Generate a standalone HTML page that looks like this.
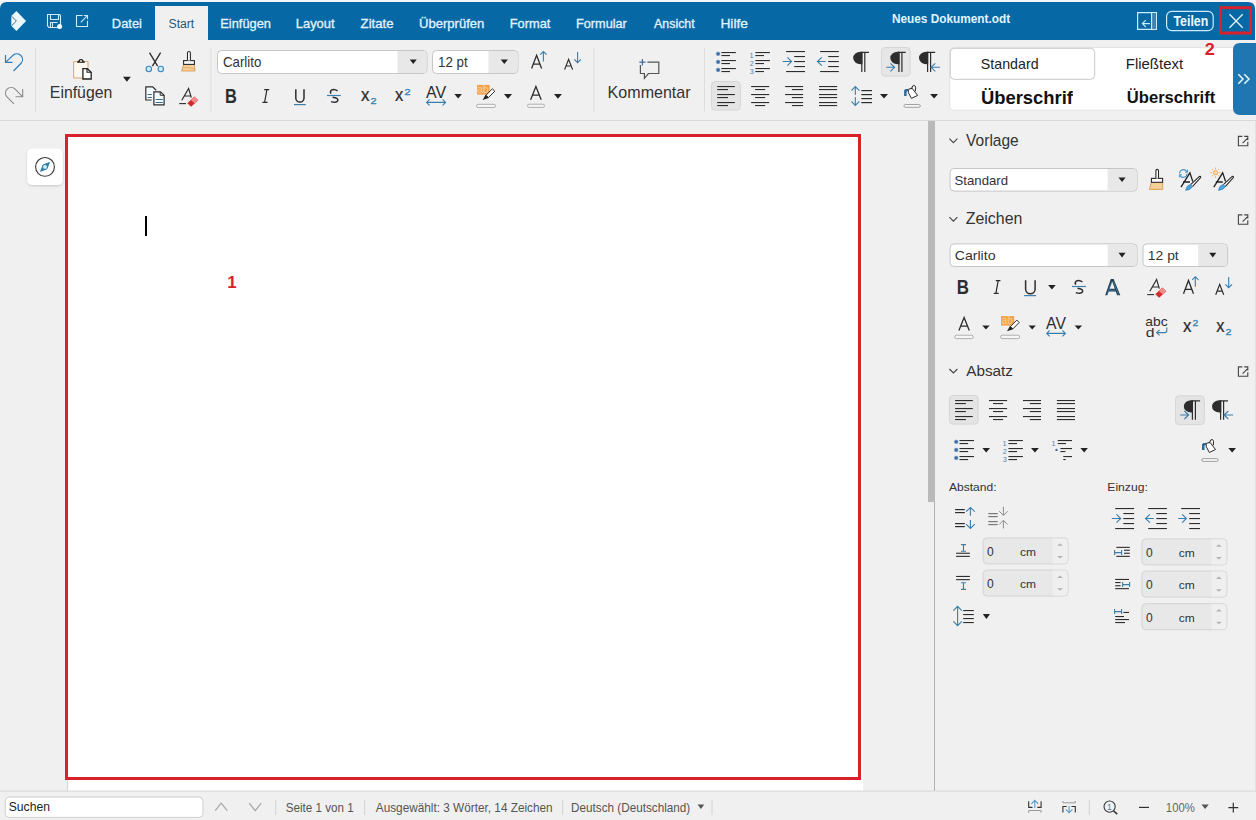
<!DOCTYPE html>
<html><head><meta charset="utf-8"><title>Neues Dokument.odt</title>
<style>
html,body{margin:0;padding:0;width:1256px;height:820px;overflow:hidden;background:#f0f0f0;font-family:"Liberation Sans",sans-serif}
svg{display:block}
</style></head><body>
<svg width="1256" height="820" viewBox="0 0 1256 820">
<defs><filter id="sh" x="-20%" y="-20%" width="140%" height="140%"><feDropShadow dx="0" dy="1" stdDeviation="1" flood-color="#000" flood-opacity="0.18"/></filter></defs>
<rect x="0" y="0" width="1256" height="42" fill="#f3f7fa" />
<path d="M0,9 Q0,2 7,2 H1248 Q1255,2 1255,9 V40 H0 Z" fill="#0669a5"/>
<rect x="155" y="6" width="53" height="34" fill="#f0f0f0" />
<path d="M16.4,10.9 L26.1,21 L16.4,31.1 L11.3,25.8 L11.3,16.1 Z" fill="#eaf7ff"/>
<path d="M11.7,16.3 L16.4,21 L11.7,25.7" stroke="#2a4058" stroke-width="0.8" fill="none" />
<path d="M47.5,14.5 H59.5 L60.5,15.5 V27.5 H49 L47.5,26 Z" stroke="#c9ecff" stroke-width="1.1" fill="none" />
<path d="M50.5,14.5 V19.5 H58.5 V14.5" stroke="#c9ecff" stroke-width="1.1" fill="none" />
<path d="M50.5,27.5 V22.5 H57.5" stroke="#c9ecff" stroke-width="1.1" fill="none" />
<path d="M52.5,23 V27" stroke="#c9ecff" stroke-width="1" fill="none" />
<circle cx="59.6" cy="26.4" r="2.5" fill="#f2fbff"/>
<path d="M82.5,15.5 H76.5 V26.5 H87.5 V20.8" stroke="#c9ecff" stroke-width="1.1" fill="none" />
<path d="M80.8,22.3 L87.3,15.7 M83.8,15.5 H87.5 V19.2" stroke="#c9ecff" stroke-width="1.1" fill="none" />
<text transform="matrix(1.0006,0,0,1,111.87,27.90)" font-family="Liberation Sans" font-weight="normal" font-size="12.90" fill="#e2f3ff" stroke="#e2f3ff" stroke-width="0.3">Datei</text>
<text transform="matrix(0.9956,0,0,1,220.27,27.90)" font-family="Liberation Sans" font-weight="normal" font-size="12.90" fill="#e2f3ff" stroke="#e2f3ff" stroke-width="0.3">Einfügen</text>
<text transform="matrix(1.0027,0,0,1,295.77,27.90)" font-family="Liberation Sans" font-weight="normal" font-size="12.90" fill="#e2f3ff" stroke="#e2f3ff" stroke-width="0.3">Layout</text>
<text transform="matrix(1.0231,0,0,1,360.60,27.90)" font-family="Liberation Sans" font-weight="normal" font-size="12.90" fill="#e2f3ff" stroke="#e2f3ff" stroke-width="0.3">Zitate</text>
<text transform="matrix(1.0130,0,0,1,419.02,27.90)" font-family="Liberation Sans" font-weight="normal" font-size="12.90" fill="#e2f3ff" stroke="#e2f3ff" stroke-width="0.3">Überprüfen</text>
<text transform="matrix(0.9943,0,0,1,509.77,27.90)" font-family="Liberation Sans" font-weight="normal" font-size="12.90" fill="#e2f3ff" stroke="#e2f3ff" stroke-width="0.3">Format</text>
<text transform="matrix(0.9867,0,0,1,575.98,27.90)" font-family="Liberation Sans" font-weight="normal" font-size="12.90" fill="#e2f3ff" stroke="#e2f3ff" stroke-width="0.3">Formular</text>
<text transform="matrix(0.9626,0,0,1,654.00,27.90)" font-family="Liberation Sans" font-weight="normal" font-size="12.90" fill="#e2f3ff" stroke="#e2f3ff" stroke-width="0.3">Ansicht</text>
<text transform="matrix(1.0709,0,0,1,720.39,27.90)" font-family="Liberation Sans" font-weight="normal" font-size="12.90" fill="#e2f3ff" stroke="#e2f3ff" stroke-width="0.3">Hilfe</text>
<text transform="matrix(0.9341,0,0,1,168.55,28.20)" font-family="Liberation Sans" font-weight="normal" font-size="13.04" fill="#2a5878" >Start</text>
<text transform="matrix(0.8784,0,0,1,891.93,22.60)" font-family="Liberation Sans" font-weight="bold" font-size="13.48" fill="#e2f3ff" >Neues Dokument.odt</text>
<path d="M1137.6,12.6 H1156.4 V29.4 H1137.6 Z" stroke="#c9ecff" stroke-width="1.2" fill="none" />
<rect x="1152.2" y="13.2" width="3.6" height="15.6" fill="#3f82b8" />
<path d="M1151.6,12.6 V29.4" stroke="#c9ecff" stroke-width="1.2" fill="none" />
<path d="M1142.4,23.6 H1149.9 M1145.8,20.2 L1142.4,23.6 L1145.8,27" stroke="#c9ecff" stroke-width="1.1" fill="none" />
<rect x="1166.6" y="11.4" width="46.6" height="19.2" rx="5" fill="none" stroke="#c9ecff" stroke-width="1.2"/>
<text transform="matrix(0.8695,0,0,1,1173.48,26.00)" font-family="Liberation Sans" font-weight="bold" font-size="14.20" fill="#f0faff" >Teilen</text>
<path d="M1229.5,14.3 L1242.7,27.7 M1242.7,14.3 L1229.5,27.7" stroke="#e4f6ff" stroke-width="1.3" fill="none" />
<rect x="0" y="40" width="1256" height="80" fill="#f0f0f0" />
<rect x="0" y="120" width="1256" height="1" fill="#d9d9d9" />
<rect x="35.0" y="48" width="1" height="64" fill="#dedede" />
<rect x="210.5" y="48" width="1" height="64" fill="#dedede" />
<rect x="593.5" y="48" width="1" height="64" fill="#dedede" />
<rect x="704.0" y="48" width="1" height="64" fill="#dedede" />
<path d="M5.5,55 V62.4 H12.6 M5.5,62.4 L13.3,55 A5.7,5.7 0 0 1 21.3,63 L13.5,71" stroke="#2f7fbe" stroke-width="1.2" fill="none" />
<path d="M22.7,89 V96.8 H15.6 M22.7,96.8 L14.7,88.7 A5.7,5.7 0 0 0 6.7,96.7 L14,103.8" stroke="#8a8a8a" stroke-width="1.1" fill="none" />
<path d="M73.6,61.6 H88 V78 H73.6 Z" stroke="#d0a070" stroke-width="0.9" fill="#fcf7f0" />
<path d="M77.2,62 H84.7" stroke="#222" stroke-width="1.6" fill="none" />
<path d="M78.9,61.8 A2.1,2.1 0 0 1 83.1,61.8" stroke="#222" stroke-width="1.2" fill="none" />
<circle cx="81" cy="61.2" r="0.8" fill="#fff"/>
<path d="M82.9,68.7 H87.3 L91.2,72.4 V79 H82.9 Z" stroke="#222" stroke-width="1.3" fill="#fff" />
<path d="M87,68.8 V72.3 H91" stroke="#222" stroke-width="1.1" fill="none" />
<text transform="matrix(0.9848,0,0,1,49.83,97.90)" font-family="Liberation Sans" font-weight="normal" font-size="16.09" fill="#333333" >Einfügen</text>
<path d="M123,76.8 L130.8,76.8 L126.9,81.8 Z" fill="#222"/>
<path d="M149.5,52.6 L157.6,66.2 M160.6,52.6 L152.4,66.2" stroke="#2d2d2d" stroke-width="1.3" fill="none" />
<circle cx="148.8" cy="69" r="2.7" fill="#c8eefc" stroke="#3a86c0" stroke-width="1.1"/>
<circle cx="160.8" cy="69" r="2.7" fill="#c8eefc" stroke="#3a86c0" stroke-width="1.1"/>
<path d="M183.7,64.2 H194.3 L195,71 H181.6 Z" fill="#f6cf98" stroke="#d89a52" stroke-width="0.9"/>
<path d="M183,67.6 Q188,66.8 194.6,69" stroke="#d89a52" stroke-width="0.6" fill="none" />
<rect x="183.6" y="60.6" width="10.8" height="3.8" fill="#fff" stroke="#2a2a2a" stroke-width="1.1"/>
<path d="M187.5,60.6 V53 A1.45,1.45 0 0 1 190.4,53 V60.6" fill="#fff" stroke="#2a2a2a" stroke-width="1.1"/>
<path d="M151.6,100 H145.8 V86.8 H152.6 L156.2,90.2" stroke="#2d2d2d" stroke-width="1.2" fill="#f4fbff" />
<rect x="147.5" y="94" width="4.3" height="1" fill="#3c6a8a" />
<rect x="147.5" y="97" width="4.3" height="1" fill="#3c6a8a" />
<path d="M153.9,91.8 H160.4 L164.1,95.3 V104.9 H153.9 Z" stroke="#2d2d2d" stroke-width="1.2" fill="#f4fbff" />
<path d="M160.2,91.9 V95.3 H164" stroke="#2d2d2d" stroke-width="1" fill="none" />
<rect x="155.6" y="99" width="7.2" height="1" fill="#3c6a8a" />
<rect x="155.6" y="102" width="7.2" height="1" fill="#3c6a8a" />
<path d="M181.8,100.2 L188.6,88.4 L191.3,97.6 M184.2,96 H190.4" stroke="#2d2d2d" stroke-width="1.2" fill="none" />
<path d="M179.2,103.6 H186" stroke="#2d2d2d" stroke-width="1.1" fill="none" />
<path d="M187.3,103.2 L194.4,96.6 L198.2,100.2 L191.1,106.8 Z" fill="#d42a2a"/>
<path d="M190.9,99.9 L194.4,96.6 L198.2,100.2 L194.7,103.5 Z" fill="#f28a8a"/>
<rect x="217.5" y="50.5" width="209.5" height="23" rx="4" fill="#fff" stroke="#c6c6c6"/>
<path d="M397.5,51 H423 Q426.5,51 426.5,54.5 V69.5 Q426.5,73 423,73 H397.5 Z" fill="#e8e8e8"/>
<text transform="matrix(0.9549,0,0,1,222.94,67.20)" font-family="Liberation Sans" font-weight="normal" font-size="13.91" fill="#333333" >Carlito</text>
<path d="M409.7,59.5 L416.8,59.5 L413.25,64 Z" fill="#222"/>
<rect x="432.5" y="50.5" width="85.5" height="23" rx="4" fill="#fff" stroke="#c6c6c6"/>
<path d="M488.5,51 H514 Q517.5,51 517.5,54.5 V69.5 Q517.5,73 514,73 H488.5 Z" fill="#e8e8e8"/>
<text transform="matrix(0.9572,0,0,1,438.10,66.80)" font-family="Liberation Sans" font-weight="normal" font-size="13.91" fill="#333333" >12 pt</text>
<path d="M500.7,59.5 L507.9,59.5 L504.29999999999995,64 Z" fill="#222"/>
<path d="M531.6,68.6 L536.6,55.3 L541.6,68.6 M533.4,64.2 H539.8" stroke="#2d2d2d" stroke-width="1.3" fill="none" />
<path d="M543.4,61.6 V51.8 M540.3,54.7 L543.4,51.6 L546.6,54.7" stroke="#3a7eab" stroke-width="1.1" fill="none" />
<path d="M564.6,69.6 L568.6,59.3 L572.6,69.6 M566,66 H571.2" stroke="#2d2d2d" stroke-width="1.2" fill="none" />
<path d="M577.6,52 V62.4 M574.3,59.3 L577.6,62.6 L580.9,59.3" stroke="#3a7eab" stroke-width="1.1" fill="none" />
<text transform="matrix(0.8257,0,0,1,224.93,102.80)" font-family="Liberation Sans" font-weight="bold" font-size="19.86" fill="#2d2d2d" >B</text>
<path d="M264.2,89.6 H269.2 M262.4,102.4 H267.6 M266.9,89.6 L264.6,102.4" stroke="#2a2a2a" stroke-width="1.2" fill="none" />
<path d="M295.8,89.2 V98 A4.1,4.1 0 0 0 304,98 V89.2" stroke="#2d2d2d" stroke-width="1.5" fill="none" />
<path d="M294,104.6 H305.8" stroke="#3d7fa8" stroke-width="1.2" fill="none" />
<path d="M337.6,90.8 Q334,88.4 331.4,90.2 Q329.6,91.8 331,93.6 M332.6,97.2 Q338.4,98 337.8,100.6 Q336.6,103.4 331,101.6" stroke="#2d2d2d" stroke-width="1.5" fill="none" />
<path d="M327,95.5 H340.8" stroke="#3d7fa8" stroke-width="1.2" fill="none" />
<text transform="matrix(0.9000,0,0,1,361.03,100.90)" font-family="Liberation Sans" font-weight="normal" font-size="18.75" fill="#2d2d2d" stroke="#2d2d2d" stroke-width="0.25">x</text>
<text transform="matrix(1.1317,0,0,1,370.45,104.00)" font-family="Liberation Sans" font-weight="normal" font-size="9.71" fill="#3d86b5" stroke="#3d86b5" stroke-width="0.35">2</text>
<text transform="matrix(0.8778,0,0,1,394.94,100.90)" font-family="Liberation Sans" font-weight="normal" font-size="18.75" fill="#2d2d2d" stroke="#2d2d2d" stroke-width="0.25">x</text>
<text transform="matrix(1.1317,0,0,1,404.45,94.90)" font-family="Liberation Sans" font-weight="normal" font-size="9.71" fill="#3d86b5" stroke="#3d86b5" stroke-width="0.35">2</text>
<text transform="matrix(0.9527,0,0,1,426.00,97.60)" font-family="Liberation Sans" font-weight="normal" font-size="16.81" fill="#2d2d2d" >AV</text>
<path d="M426.6,102.4 H445.6 M429.6,99.4 L426.6,102.4 L429.6,105.4 M442.6,99.4 L445.6,102.4 L442.6,105.4" stroke="#3a7eab" stroke-width="1.1" fill="none" />
<path d="M454.4,94.1 L461.9,94.1 L458.15,98.6 Z" fill="#222"/>
<rect x="477.1" y="84.9" width="12.6" height="9.7" fill="#f0a24e" />
<text transform="matrix(1.0000,0,0,1,477.20,93.20)" font-family="Liberation Sans" font-weight="normal" font-size="10.00" fill="#f9cf98" >ab</text>
<path d="M486,95.2 L492.4,88.8 L494.8,91.2 L488.4,97.6 Z" stroke="#2a2a2a" stroke-width="1" fill="#fff" />
<path d="M485.6,94.8 L488.8,98 L482.6,99.9 Z" fill="#222"/>
<rect x="476.5" y="104.3" width="19" height="3.2" rx="1.6" fill="#f6f6f6" stroke="#a8a8a8" stroke-width="0.9"/>
<path d="M504,94 L512,94 L508.0,98.8 Z" fill="#222"/>
<path d="M530.6,99.8 L535.9,86.6 L541.2,99.8 M532.6,95.2 H539.2" stroke="#2d2d2d" stroke-width="1.3" fill="none" />
<rect x="527.5" y="104.2" width="17" height="3.2" rx="1.6" fill="#f6f6f6" stroke="#a8a8a8" stroke-width="0.9"/>
<path d="M554,94 L561.9,94 L557.95,98.8 Z" fill="#222"/>
<path d="M642.4,59 V65.4 M639.3,62.2 H645.5" stroke="#3d6fa0" stroke-width="1.2" fill="none" />
<path d="M647.4,62.2 H658.8 V73.5 H648.4 L644.4,78.4 V73.5 H640.4 V64.9" stroke="#555" stroke-width="1.2" fill="none" />
<text transform="matrix(1.0176,0,0,1,607.61,97.90)" font-family="Liberation Sans" font-weight="normal" font-size="15.80" fill="#333333" >Kommentar</text>
<circle cx="718.1" cy="53.8" r="1.9" fill="#3f6f9e" stroke="#6a9ac8" stroke-width="0.5"/>
<circle cx="718.1" cy="61.9" r="1.9" fill="#3f6f9e" stroke="#6a9ac8" stroke-width="0.5"/>
<circle cx="718.1" cy="69.9" r="1.9" fill="#3f6f9e" stroke="#6a9ac8" stroke-width="0.5"/>
<rect x="721.4" y="52" width="14.5" height="1.1" fill="#2d2d2d" />
<rect x="721.4" y="60" width="14.5" height="1.1" fill="#2d2d2d" />
<rect x="721.4" y="68" width="14.5" height="1.1" fill="#2d2d2d" />
<rect x="721.4" y="55" width="8.6" height="1.1" fill="#2d2d2d" />
<rect x="721.4" y="63" width="8.6" height="1.1" fill="#2d2d2d" />
<rect x="721.4" y="71" width="8.6" height="1.1" fill="#2d2d2d" />
<text transform="matrix(0.9000,0,0,1,749.55,57.60)" font-family="Liberation Sans" font-weight="normal" font-size="8.10" fill="#4f86b0" >1</text>
<text transform="matrix(0.9000,0,0,1,749.74,65.70)" font-family="Liberation Sans" font-weight="normal" font-size="8.10" fill="#4f86b0" >2</text>
<text transform="matrix(0.9000,0,0,1,749.81,73.80)" font-family="Liberation Sans" font-weight="normal" font-size="8.10" fill="#4f86b0" >3</text>
<rect x="755.4" y="52" width="14.5" height="1.1" fill="#2d2d2d" />
<rect x="755.4" y="60" width="14.5" height="1.1" fill="#2d2d2d" />
<rect x="755.4" y="68" width="14.5" height="1.1" fill="#2d2d2d" />
<rect x="755.4" y="55" width="8.6" height="1.1" fill="#2d2d2d" />
<rect x="755.4" y="63" width="8.6" height="1.1" fill="#2d2d2d" />
<rect x="755.4" y="71" width="8.6" height="1.1" fill="#2d2d2d" />
<rect x="786.1" y="51" width="18.9" height="1.1" fill="#2d2d2d" />
<rect x="786.1" y="71" width="18.9" height="1.1" fill="#2d2d2d" />
<rect x="794.2" y="56" width="10.8" height="1.1" fill="#2d2d2d" />
<rect x="794.2" y="61" width="10.8" height="1.1" fill="#2d2d2d" />
<rect x="794.2" y="66" width="10.8" height="1.1" fill="#2d2d2d" />
<path d="M782.7,61.5 H791.4 M787.4,57.3 L791.6,61.5 L787.4,65.7" stroke="#3a7eab" stroke-width="1.1" fill="none" />
<rect x="820.1" y="51" width="18.7" height="1.1" fill="#2d2d2d" />
<rect x="820.1" y="71" width="18.7" height="1.1" fill="#2d2d2d" />
<rect x="828.2" y="56" width="10.6" height="1.1" fill="#2d2d2d" />
<rect x="828.2" y="61" width="10.6" height="1.1" fill="#2d2d2d" />
<rect x="828.2" y="66" width="10.6" height="1.1" fill="#2d2d2d" />
<path d="M825.7,61.5 H817.6 M821.8,57.3 L817.4,61.5 L821.8,65.7" stroke="#3a7eab" stroke-width="1.1" fill="none" />
<path d="M862.4,51.8 H860.5999999999999 A7.4,6.2 0 0 0 860.5999999999999,64.2 H862.4 Z" fill="#2d2d2d"/>
<path d="M861.8,51.9 V71.9 M864.8,51.9 V71.9 M860.8,52.4 H869" stroke="#2d2d2d" stroke-width="1.2" fill="none" />
<rect x="881.5" y="47.5" width="28.6" height="28.6" rx="3.5" fill="#e6e6e6" stroke="#d6d6d6"/>
<path d="M899.5,51.8 H897.6999999999999 A7.4,6.2 0 0 0 897.6999999999999,64.2 H899.5 Z" fill="#2d2d2d"/>
<path d="M898.9,51.9 V71.9 M901.9,51.9 V71.9 M897.9,52.4 H905.7" stroke="#2d2d2d" stroke-width="1.2" fill="none" />
<path d="M886.2,67.3 H894.4 M890.4,63.3 L894.6,67.3 L890.4,71.3" stroke="#3a7eab" stroke-width="1.1" fill="none" />
<path d="M928.2,51.8 H926.4 A7.4,6.2 0 0 0 926.4,64.2 H928.2 Z" fill="#2d2d2d"/>
<path d="M927.6,51.9 V71.9 M930.6,51.9 V71.9 M926.6,52.4 H935.2" stroke="#2d2d2d" stroke-width="1.2" fill="none" />
<path d="M940.1,67.3 H931.2 M935.3,63.3 L931,67.3 L935.3,71.3" stroke="#3a7eab" stroke-width="1.1" fill="none" />
<rect x="711.5" y="81.5" width="28.8" height="28.6" rx="3.5" fill="#e4e4e4" stroke="#d6d6d6"/>
<rect x="717.2" y="86" width="17.7" height="1.1" fill="#2d2d2d" />
<rect x="717.2" y="89" width="10.8" height="1.1" fill="#2d2d2d" />
<rect x="717.2" y="94" width="17.7" height="1.1" fill="#2d2d2d" />
<rect x="717.2" y="97" width="10.8" height="1.1" fill="#2d2d2d" />
<rect x="717.2" y="102" width="17.7" height="1.1" fill="#2d2d2d" />
<rect x="717.2" y="105" width="10.8" height="1.1" fill="#2d2d2d" />
<rect x="751.1" y="86" width="18.1" height="1.1" fill="#2d2d2d" />
<rect x="755.1" y="89" width="10.1" height="1.1" fill="#2d2d2d" />
<rect x="751.1" y="94" width="18.1" height="1.1" fill="#2d2d2d" />
<rect x="755.1" y="97" width="10.1" height="1.1" fill="#2d2d2d" />
<rect x="751.1" y="102" width="18.1" height="1.1" fill="#2d2d2d" />
<rect x="755.1" y="105" width="10.1" height="1.1" fill="#2d2d2d" />
<rect x="785.1" y="86" width="18" height="1.1" fill="#2d2d2d" />
<rect x="791.9" y="89" width="11.2" height="1.1" fill="#2d2d2d" />
<rect x="785.1" y="94" width="18" height="1.1" fill="#2d2d2d" />
<rect x="791.9" y="97" width="11.2" height="1.1" fill="#2d2d2d" />
<rect x="785.1" y="102" width="18" height="1.1" fill="#2d2d2d" />
<rect x="791.9" y="105" width="11.2" height="1.1" fill="#2d2d2d" />
<rect x="819" y="86" width="18.1" height="1.1" fill="#2d2d2d" />
<rect x="819" y="89" width="18.1" height="1.1" fill="#2d2d2d" />
<rect x="819" y="94" width="18.1" height="1.1" fill="#2d2d2d" />
<rect x="819" y="97" width="18.1" height="1.1" fill="#2d2d2d" />
<rect x="819" y="102" width="18.1" height="1.1" fill="#2d2d2d" />
<rect x="819" y="105" width="18.1" height="1.1" fill="#2d2d2d" />
<path d="M855.3,86.8 V95 M855.3,97 V105.3 M851.4,90.6 L855.3,86.6 L859.4,90.6 M851.4,101.4 L855.3,105.4 L859.4,101.4" stroke="#3a7eab" stroke-width="1.1" fill="none" />
<rect x="861.3" y="90" width="10.7" height="1.2" fill="#2d2d2d" />
<rect x="861.3" y="94" width="10.7" height="1.2" fill="#2d2d2d" />
<rect x="861.3" y="98" width="10.7" height="1.2" fill="#2d2d2d" />
<rect x="861.3" y="102" width="10.7" height="1.2" fill="#2d2d2d" />
<path d="M880,94.1 L888,94.1 L884.0,98.5 Z" fill="#222"/>
<path d="M904.1,96 V90.4 Q904.5,89.1 906,89 H908.4 L908,90.7 Q906.6,90.9 906.6,92.4 V96 Z" fill="#2d6a9c"/>
<path d="M908.2,89.4 L912,88.2 L917.6,95.4 L911.4,98.4 L908.4,92.6 Z" stroke="#2a2a2a" stroke-width="1" fill="#fff" />
<path d="M911.4,89.2 Q912.2,84.8 914.5,85.4 Q916.2,86.2 915.4,91.2" stroke="#2a2a2a" stroke-width="1" fill="none" />
<rect x="903.9" y="104.5" width="16.4" height="2.8" rx="1.4" fill="#f6f6f6" stroke="#a0a0a0" stroke-width="1"/>
<path d="M930.1,94.1 L938.1,94.1 L934.1,98.5 Z" fill="#222"/>
<rect x="949.8" y="47.6" width="290" height="62.6" rx="3" fill="#fff" stroke="#e2e2e2" stroke-width="1"/>
<rect x="950.3" y="48.3" width="144.4" height="31" rx="4" fill="#fff" stroke="#c9c9c9" stroke-width="1"/>
<text transform="matrix(0.9262,0,0,1,980.86,69.20)" font-family="Liberation Sans" font-weight="normal" font-size="15.36" fill="#222" >Standard</text>
<text transform="matrix(0.9734,0,0,1,1125.80,69.20)" font-family="Liberation Sans" font-weight="normal" font-size="15.36" fill="#222" >Fließtext</text>
<clipPath id="c1"><rect x="975" y="80" width="98" height="30"/></clipPath>
<g clip-path="url(#c1)">
<text transform="matrix(0.9547,0,0,1,980.90,103.60)" font-family="Liberation Sans" font-weight="bold" font-size="19.28" fill="#111" >Überschrift</text>
</g>
<text transform="matrix(0.9543,0,0,1,1126.80,102.70)" font-family="Liberation Sans" font-weight="bold" font-size="17.39" fill="#111" >Überschrift</text>
<path d="M1256,43 H1240 Q1233,43 1233,50 V108 Q1233,115 1240,115 H1256 Z" fill="#1f76b0"/>
<path d="M1238.3,74.2 L1243,79 L1238.3,83.8 M1244.3,74.2 L1249,79 L1244.3,83.8" stroke="#e6f7ff" stroke-width="1.5" fill="none" />
<rect x="0" y="121" width="934" height="670" fill="#f0f0f0" />
<rect x="68" y="134" width="795" height="657" fill="#fff" />
<rect x="67" y="134" width="1" height="657" fill="#d4d4d4" />
<rect x="928" y="121" width="7" height="381" fill="#b9b9b9" />
<rect x="934" y="502" width="1" height="289" fill="#b3b3b3" />
<rect x="27.2" y="148.4" width="35.5" height="36.6" rx="5" fill="#fff" filter="url(#sh)"/>
<circle cx="45" cy="166.9" r="9.4" fill="#fff" stroke="#3a3a3a" stroke-width="1.1"/>
<path d="M49.4,162.5 L46.9,168.8 L40.6,171.3 L43.1,165 Z" fill="#2a7fa8" stroke="#2a7fa8" stroke-width="1" stroke-linejoin="round"/>
<circle cx="45" cy="166.9" r="1.9" fill="#d8f4ff"/>
<rect x="145" y="216" width="2" height="20" fill="#000" />
<rect x="935" y="121" width="321" height="670" fill="#f0f0f0" />
<rect x="1255" y="121" width="1" height="670" fill="#e2e2e2" />
<path d="M949.4,138.6 L953.4,142.6 L957.4,138.6" stroke="#444" stroke-width="1.1" fill="none" />
<text transform="matrix(0.9555,0,0,1,966.12,146.00)" font-family="Liberation Sans" font-weight="normal" font-size="16.23" fill="#333" >Vorlage</text>
<path d="M1242.4,136.4 H1238.4 V145.8 H1247.8 V141.8 M1242.6,143.20000000000002 L1247.4,138.4 M1244.2,136.4 H1247.8 V140.0" stroke="#444" stroke-width="1.1" fill="none" />
<path d="M949.4,217.2 L953.4,221.2 L957.4,217.2" stroke="#444" stroke-width="1.1" fill="none" />
<text transform="matrix(1.0007,0,0,1,965.72,224.30)" font-family="Liberation Sans" font-weight="normal" font-size="15.94" fill="#333" >Zeichen</text>
<path d="M1242.4,214.9 H1238.4 V224.3 H1247.8 V220.3 M1242.6,221.70000000000002 L1247.4,216.9 M1244.2,214.9 H1247.8 V218.5" stroke="#444" stroke-width="1.1" fill="none" />
<path d="M949.4,369 L953.4,373 L957.4,369" stroke="#444" stroke-width="1.1" fill="none" />
<text transform="matrix(0.9871,0,0,1,966.20,376.00)" font-family="Liberation Sans" font-weight="normal" font-size="15.51" fill="#333" >Absatz</text>
<path d="M1242.4,366.90000000000003 H1238.4 V376.3 H1247.8 V372.3 M1242.6,373.70000000000005 L1247.4,368.90000000000003 M1244.2,366.90000000000003 H1247.8 V370.50000000000006" stroke="#444" stroke-width="1.1" fill="none" />
<rect x="950.1" y="168.5" width="187" height="22.6" rx="4" fill="#fff" stroke="#c6c6c6"/>
<path d="M1107.6,169 H1133.1 Q1136.6,169 1136.6,172.5 V187.1 Q1136.6,190.6 1133.1,190.6 H1107.6 Z" fill="#e8e8e8"/>
<text transform="matrix(0.9824,0,0,1,954.40,185.20)" font-family="Liberation Sans" font-weight="normal" font-size="13.48" fill="#333333" >Standard</text>
<path d="M1118.5,177.4 L1125.6,177.4 L1122.05,182 Z" fill="#222"/>
<path d="M1151.4,182.3 H1162.6 L1162.8,189.4 H1149.4 Z" fill="#f6cf98" stroke="#d89a52" stroke-width="0.9"/>
<rect x="1151.4" y="178.4" width="11.2" height="3.9" fill="#fff" stroke="#2a2a2a" stroke-width="1.1"/>
<path d="M1155.9,178.4 V170.7 A1.3,1.3 0 0 1 1158.5,170.7 V178.4" fill="#fff" stroke="#2a2a2a" stroke-width="1.1"/>
<path d="M1181,187.2 L1189.9,172.8 L1192.8,181.5 M1183,182 H1190" stroke="#222" stroke-width="1.3" fill="none" />
<path d="M1190.6,184.6 L1199.2,176.6 Q1201,175.8 1200.6,177.6 L1192.4,186.6" stroke="#222" stroke-width="1.1" fill="#fff" />
<path d="M1185.6,190.4 Q1186.4,185.4 1190.2,184.4 L1192.6,186.6 Q1191,190 1185.6,190.4 Z" fill="#4aa3dc" stroke="#2d7fb8" stroke-width="0.6"/>
<path d="M1179.6,173.4 A3.9,3.9 0 0 1 1187,171.8 M1187.2,173.6 A3.9,3.9 0 0 1 1179.8,175.2" stroke="#3d8fc6" stroke-width="1.1" fill="none" />
<path d="M1187.6,169.6 V172.2 H1185 M1179.4,177.4 V174.8 H1182" stroke="#3d8fc6" stroke-width="0.9" fill="none" />
<path d="M1213.8,187.2 L1222.7,172.8 L1225.6,181.5 M1215.8,182 H1222.8" stroke="#222" stroke-width="1.3" fill="none" />
<path d="M1223.3999999999999,184.6 L1232.0,176.6 Q1233.8,175.8 1233.3999999999999,177.6 L1225.2,186.6" stroke="#222" stroke-width="1.1" fill="#fff" />
<path d="M1218.3999999999999,190.4 Q1219.2,185.4 1223.0,184.4 L1225.3999999999999,186.6 Q1223.8,190 1218.3999999999999,190.4 Z" fill="#4aa3dc" stroke="#2d7fb8" stroke-width="0.6"/>
<circle cx="1215.5" cy="172.7" r="2.2" fill="#fbd8a8" stroke="#f0a050" stroke-width="0.8"/>
<path d="M1215.5,167.6 V169.2 M1215.5,176.2 V177.8 M1210.4,172.7 H1212 M1219,172.7 H1220.6 M1211.9,169.1 L1213,170.2 M1218,175.2 L1219.1,176.3 M1219.1,169.1 L1218,170.2 M1213,175.2 L1211.9,176.3" stroke="#f0a050" stroke-width="0.9" fill="none" />
<rect x="950.1" y="243.9" width="187" height="22.6" rx="4" fill="#fff" stroke="#c6c6c6"/>
<path d="M1107.6,244.4 H1133.1 Q1136.6,244.4 1136.6,247.9 V262.5 Q1136.6,266.0 1133.1,266.0 H1107.6 Z" fill="#e8e8e8"/>
<text transform="matrix(1.1089,0,0,1,954.69,260.00)" font-family="Liberation Sans" font-weight="normal" font-size="12.75" fill="#333333" >Carlito</text>
<path d="M1118.5,252.8 L1125.6,252.8 L1122.05,257.4 Z" fill="#222"/>
<rect x="1143.0" y="243.9" width="84.6" height="22.6" rx="4" fill="#fff" stroke="#c6c6c6"/>
<path d="M1198.1,244.4 H1223.6 Q1227.1,244.4 1227.1,247.9 V262.5 Q1227.1,266.0 1223.6,266.0 H1198.1 Z" fill="#e8e8e8"/>
<text transform="matrix(1.0882,0,0,1,1147.86,259.80)" font-family="Liberation Sans" font-weight="normal" font-size="12.75" fill="#333333" >12 pt</text>
<path d="M1209.2,252.8 L1216.3,252.8 L1212.75,257.4 Z" fill="#222"/>
<text transform="matrix(0.8504,0,0,1,956.70,293.80)" font-family="Liberation Sans" font-weight="bold" font-size="19.86" fill="#2d2d2d" >B</text>
<path d="M995.8,280.6 H1000.4 M993.8,293.4 H998.6 M998.2,280.6 L995.9,293.4" stroke="#2a2a2a" stroke-width="1.2" fill="none" />
<path d="M1025.6,280.2 V289 A4,4 0 0 0 1035.1,289 V280.2" stroke="#2d2d2d" stroke-width="1.5" fill="none" />
<path d="M1024.1,295.6 H1036.1" stroke="#3d7fa8" stroke-width="1.2" fill="none" />
<path d="M1048.1,285.1 L1055.7,285.1 L1051.9,289.4 Z" fill="#222"/>
<path d="M1082.4,281.8 Q1078.8,279.4 1076.2,281.2 Q1074.4,282.8 1075.8,284.6 M1077.4,288.2 Q1083.2,289 1082.6,291.6 Q1081.4,294.4 1075.8,292.6" stroke="#2d2d2d" stroke-width="1.5" fill="none" />
<path d="M1072,286.5 H1086" stroke="#3d7fa8" stroke-width="1.2" fill="none" />
<path d="M1105.2,295.3 L1110.8,279.1 H1113.6 L1120.3,295.3 H1117.1 L1115.7,291.4 H1108.7 L1107.4,295.3 Z M1109.6,288.7 H1114.8 L1112.2,281.6 Z" fill="#1f3d52" fill-rule="evenodd"/>
<path d="M1107,295 L1111.9,281.2 M1113.4,281.6 L1118.6,295 M1109.4,290.2 H1115.2" stroke="#4f8fb6" stroke-width="0.7" fill="none" />
<path d="M1149.8,291.2 L1156.6,279.4 L1159.3,288.6 M1152.2,287 H1158.4" stroke="#2d2d2d" stroke-width="1.2" fill="none" />
<path d="M1147.2,294.6 H1154" stroke="#2d2d2d" stroke-width="1.1" fill="none" />
<path d="M1155.3,294.2 L1162.4,287.6 L1166.2,291.2 L1159.1,297.8 Z" fill="#d42a2a"/>
<path d="M1158.9,290.9 L1162.4,287.6 L1166.2,291.2 L1162.7,294.5 Z" fill="#f28a8a"/>
<path d="M1183.5,293.7 L1188.5,280.4 L1193.5,293.7 M1185.3,289.3 H1191.7" stroke="#2d2d2d" stroke-width="1.3" fill="none" />
<path d="M1195.3,286.7 V276.9 M1192.2,279.8 L1195.3,276.7 L1198.5,279.8" stroke="#3a7eab" stroke-width="1.1" fill="none" />
<path d="M1215.7,294.7 L1219.7,284.4 L1223.7,294.7 M1217.1,291.1 H1222.3" stroke="#2d2d2d" stroke-width="1.2" fill="none" />
<path d="M1228.7,277.1 V287.5 M1225.4,284.4 L1228.7,287.7 L1232,284.4" stroke="#3a7eab" stroke-width="1.1" fill="none" />
<path d="M958.9,330.6 L964.1,317.6 L969.3,330.6 M960.9,326.1 H967.3" stroke="#2d2d2d" stroke-width="1.3" fill="none" />
<rect x="954.7" y="335.2" width="18.6" height="3.4" rx="1.7" fill="#f6f6f6" stroke="#a8a8a8" stroke-width="0.9"/>
<path d="M982.3,325.4 L989.6,325.4 L985.95,329.5 Z" fill="#222"/>
<rect x="1001" y="316.1" width="13.1" height="9.5" fill="#f0a24e" />
<text transform="matrix(1.0000,0,0,1,1001.60,324.30)" font-family="Liberation Sans" font-weight="normal" font-size="10.00" fill="#f9cf98" >ab</text>
<path d="M1010.4,326.5 L1016.8,320.1 L1019.2,322.5 L1012.8,328.9 Z" stroke="#2a2a2a" stroke-width="1" fill="#fff" />
<path d="M1010.0,326.1 L1013.2,329.3 L1007.0,331.20000000000005 Z" fill="#222"/>
<rect x="1000.6" y="335.2" width="19" height="3.4" rx="1.7" fill="#f6f6f6" stroke="#a8a8a8" stroke-width="0.9"/>
<path d="M1028.6,325.4 L1035.8,325.4 L1032.1999999999998,329.5 Z" fill="#222"/>
<text transform="matrix(0.9225,0,0,1,1046.10,329.00)" font-family="Liberation Sans" font-weight="normal" font-size="17.10" fill="#2d2d2d" >AV</text>
<path d="M1046.7,333.4 H1065.4 M1049.7,330.4 L1046.7,333.4 L1049.7,336.4 M1062.4,330.4 L1065.4,333.4 L1062.4,336.4" stroke="#3a7eab" stroke-width="1.1" fill="none" />
<path d="M1074.6,325.4 L1082.1,325.4 L1078.35,329.5 Z" fill="#222"/>
<text transform="matrix(1.1361,0,0,1,1145.35,326.10)" font-family="Liberation Sans" font-weight="normal" font-size="12.19" fill="#2d2d2d" >abc</text>
<text transform="matrix(1.1634,0,0,1,1145.67,337.30)" font-family="Liberation Sans" font-weight="normal" font-size="13.56" fill="#2d2d2d" >d</text>
<path d="M1166.8,327.6 V330.4 Q1166.8,332.6 1164.6,332.6 H1156.8 M1159.6,329.8 L1156.6,332.6 L1159.6,335.4" stroke="#3a7eab" stroke-width="1.1" fill="none" />
<text transform="matrix(0.9000,0,0,1,1183.03,331.90)" font-family="Liberation Sans" font-weight="normal" font-size="18.75" fill="#2d2d2d" stroke="#2d2d2d" stroke-width="0.25">x</text>
<text transform="matrix(1.0705,0,0,1,1192.57,325.70)" font-family="Liberation Sans" font-weight="normal" font-size="9.86" fill="#3d86b5" stroke="#3d86b5" stroke-width="0.35">2</text>
<text transform="matrix(0.8778,0,0,1,1216.14,331.90)" font-family="Liberation Sans" font-weight="normal" font-size="18.75" fill="#2d2d2d" stroke="#2d2d2d" stroke-width="0.25">x</text>
<text transform="matrix(1.1091,0,0,1,1225.56,334.70)" font-family="Liberation Sans" font-weight="normal" font-size="9.71" fill="#3d86b5" stroke="#3d86b5" stroke-width="0.35">2</text>
<rect x="949.4" y="395.5" width="28.8" height="28.6" rx="3.5" fill="#e4e4e4" stroke="#d6d6d6"/>
<rect x="955.1" y="400" width="17.7" height="1.1" fill="#2d2d2d" />
<rect x="955.1" y="403" width="10.8" height="1.1" fill="#2d2d2d" />
<rect x="955.1" y="408" width="17.7" height="1.1" fill="#2d2d2d" />
<rect x="955.1" y="411" width="10.8" height="1.1" fill="#2d2d2d" />
<rect x="955.1" y="416" width="17.7" height="1.1" fill="#2d2d2d" />
<rect x="955.1" y="419" width="10.8" height="1.1" fill="#2d2d2d" />
<rect x="989.0" y="400" width="18.1" height="1.1" fill="#2d2d2d" />
<rect x="993.0" y="403" width="10.1" height="1.1" fill="#2d2d2d" />
<rect x="989.0" y="408" width="18.1" height="1.1" fill="#2d2d2d" />
<rect x="993.0" y="411" width="10.1" height="1.1" fill="#2d2d2d" />
<rect x="989.0" y="416" width="18.1" height="1.1" fill="#2d2d2d" />
<rect x="993.0" y="419" width="10.1" height="1.1" fill="#2d2d2d" />
<rect x="1023.0" y="400" width="18" height="1.1" fill="#2d2d2d" />
<rect x="1029.8" y="403" width="11.2" height="1.1" fill="#2d2d2d" />
<rect x="1023.0" y="408" width="18" height="1.1" fill="#2d2d2d" />
<rect x="1029.8" y="411" width="11.2" height="1.1" fill="#2d2d2d" />
<rect x="1023.0" y="416" width="18" height="1.1" fill="#2d2d2d" />
<rect x="1029.8" y="419" width="11.2" height="1.1" fill="#2d2d2d" />
<rect x="1056.9" y="400" width="18.1" height="1.1" fill="#2d2d2d" />
<rect x="1056.9" y="403" width="18.1" height="1.1" fill="#2d2d2d" />
<rect x="1056.9" y="408" width="18.1" height="1.1" fill="#2d2d2d" />
<rect x="1056.9" y="411" width="18.1" height="1.1" fill="#2d2d2d" />
<rect x="1056.9" y="416" width="18.1" height="1.1" fill="#2d2d2d" />
<rect x="1056.9" y="419" width="18.1" height="1.1" fill="#2d2d2d" />
<rect x="1175.5" y="395.8" width="28.8" height="28.8" rx="3.5" fill="#e4e4e4" stroke="#d6d6d6"/>
<path d="M1193.0,400.2 H1191.2 A7.4,6.2 0 0 0 1191.2,412.59999999999997 H1193.0 Z" fill="#2d2d2d"/>
<path d="M1192.4,400.3 V419.8 M1195.4,400.3 V419.8 M1191.4,400.8 H1200.1" stroke="#2d2d2d" stroke-width="1.2" fill="none" />
<path d="M1180.2,415 H1188.4 M1184.4,411 L1188.6,415 L1184.4,419" stroke="#3a7eab" stroke-width="1.1" fill="none" />
<path d="M1221.1999999999998,400.2 H1219.3999999999999 A7.4,6.2 0 0 0 1219.3999999999999,412.59999999999997 H1221.1999999999998 Z" fill="#2d2d2d"/>
<path d="M1220.6,400.3 V419.8 M1223.6,400.3 V419.8 M1219.6,400.8 H1228" stroke="#2d2d2d" stroke-width="1.2" fill="none" />
<path d="M1233.1,415 H1224.4 M1228.3,411 L1224.1,415 L1228.3,419" stroke="#3a7eab" stroke-width="1.1" fill="none" />
<circle cx="956.2" cy="441.8" r="1.9" fill="#3f6f9e" stroke="#6a9ac8" stroke-width="0.5"/>
<circle cx="956.2" cy="449.9" r="1.9" fill="#3f6f9e" stroke="#6a9ac8" stroke-width="0.5"/>
<circle cx="956.2" cy="457.9" r="1.9" fill="#3f6f9e" stroke="#6a9ac8" stroke-width="0.5"/>
<rect x="959.5" y="440" width="14.5" height="1.1" fill="#2d2d2d" />
<rect x="959.5" y="448" width="14.5" height="1.1" fill="#2d2d2d" />
<rect x="959.5" y="456" width="14.5" height="1.1" fill="#2d2d2d" />
<rect x="959.5" y="443" width="8.6" height="1.1" fill="#2d2d2d" />
<rect x="959.5" y="451" width="8.6" height="1.1" fill="#2d2d2d" />
<rect x="959.5" y="459" width="8.6" height="1.1" fill="#2d2d2d" />
<path d="M982.4,448.1 L990,448.1 L986.2,452.5 Z" fill="#222"/>
<text transform="matrix(0.9000,0,0,1,1002.55,445.60)" font-family="Liberation Sans" font-weight="normal" font-size="8.10" fill="#4f86b0" >1</text>
<text transform="matrix(0.9000,0,0,1,1002.74,453.70)" font-family="Liberation Sans" font-weight="normal" font-size="8.10" fill="#4f86b0" >2</text>
<text transform="matrix(0.9000,0,0,1,1002.81,461.80)" font-family="Liberation Sans" font-weight="normal" font-size="8.10" fill="#4f86b0" >3</text>
<rect x="1008.4" y="440" width="14.5" height="1.1" fill="#2d2d2d" />
<rect x="1008.4" y="448" width="14.5" height="1.1" fill="#2d2d2d" />
<rect x="1008.4" y="456" width="14.5" height="1.1" fill="#2d2d2d" />
<rect x="1008.4" y="443" width="8.6" height="1.1" fill="#2d2d2d" />
<rect x="1008.4" y="451" width="8.6" height="1.1" fill="#2d2d2d" />
<rect x="1008.4" y="459" width="8.6" height="1.1" fill="#2d2d2d" />
<path d="M1031,448.1 L1038.9,448.1 L1034.95,452.5 Z" fill="#222"/>
<text transform="matrix(0.9000,0,0,1,1051.45,445.80)" font-family="Liberation Sans" font-weight="normal" font-size="8.10" fill="#4f86b0" >1</text>
<rect x="1057.7" y="440" width="14.3" height="1.1" fill="#2d2d2d" />
<rect x="1057.7" y="443" width="8.3" height="1.1" fill="#2d2d2d" />
<circle cx="1056.5" cy="449.9" r="1.2" fill="#3f6f9e"/>
<rect x="1060.4" y="448" width="11.6" height="1.1" fill="#2d2d2d" />
<rect x="1060.4" y="451" width="5" height="1.1" fill="#2d2d2d" />
<rect x="1063.3" y="456" width="8.7" height="1.1" fill="#2d2d2d" />
<rect x="1063.3" y="459" width="2.4" height="1.1" fill="#2d2d2d" />
<path d="M1080.4,448.1 L1087.9,448.1 L1084.15,452.5 Z" fill="#222"/>
<path d="M1202.0,450.1 V444.5 Q1202.4,443.20000000000005 1203.9,443.1 H1206.3 L1205.9,444.8 Q1204.5,445.0 1204.5,446.5 V450.1 Z" fill="#2d6a9c"/>
<path d="M1206.1,443.5 L1209.9,442.3 L1215.5,449.5 L1209.3,452.5 L1206.3,446.70000000000005 Z" stroke="#2a2a2a" stroke-width="1" fill="#fff" />
<path d="M1209.3,443.3 Q1210.1,438.90000000000003 1212.4,439.5 Q1214.1,440.3 1213.3,445.3" stroke="#2a2a2a" stroke-width="1" fill="none" />
<rect x="1201.8" y="458.6" width="16.4" height="2.8" rx="1.4" fill="#f6f6f6" stroke="#a0a0a0" stroke-width="1"/>
<path d="M1228.3,448 L1236,448 L1232.15,452.6 Z" fill="#222"/>
<text transform="matrix(1.1247,0,0,1,949.00,490.60)" font-family="Liberation Sans" font-weight="normal" font-size="10.72" fill="#333" >Abstand:</text>
<text transform="matrix(1.1313,0,0,1,1107.33,490.60)" font-family="Liberation Sans" font-weight="normal" font-size="10.72" fill="#333" >Einzug:</text>
<rect x="955.1" y="509" width="9.7" height="1.2" fill="#2d2d2d" />
<rect x="955.1" y="512" width="9.7" height="1.2" fill="#2d2d2d" />
<rect x="955.1" y="523" width="9.7" height="1.2" fill="#2d2d2d" />
<rect x="955.1" y="526" width="9.7" height="1.2" fill="#2d2d2d" />
<path d="M970.4,507.6 V515.8 M966.1,511.7 L970.4,507.4 L974.8,511.7 M970.4,520.1 V528.3 M966.1,524.1 L970.4,528.4 L974.8,524.1" stroke="#3a7eab" stroke-width="1.1" fill="none" />
<rect x="988.3" y="513" width="9.4" height="1.2" fill="#7a7a7a" />
<rect x="988.3" y="516" width="9.4" height="1.2" fill="#7a7a7a" />
<rect x="988.3" y="521" width="9.4" height="1.2" fill="#7a7a7a" />
<rect x="988.3" y="524" width="9.4" height="1.2" fill="#7a7a7a" />
<path d="M1003.4,506.8 V515.3 M999.2,511.2 L1003.4,515.4 L1007.6,511.2 M1003.4,520.5 V528.5 M999.2,524.5 L1003.4,520.3 L1007.6,524.5" stroke="#8c8c8c" stroke-width="1" fill="none" />
<path d="M961,544.6 H966 M963.5,544.6 V551.2 M961,551.2 H966" stroke="#3a7eab" stroke-width="1.1" fill="none" />
<rect x="956.1" y="552.7" width="13.8" height="1.1" fill="#2d2d2d" />
<rect x="956.1" y="555.8" width="13.8" height="1.1" fill="#2d2d2d" />
<rect x="956.1" y="575.9" width="13.8" height="1.1" fill="#2d2d2d" />
<rect x="956.1" y="579.1" width="13.8" height="1.1" fill="#2d2d2d" />
<path d="M961,582.8 H966 M963.5,582.8 V589.4 M961,589.4 H966" stroke="#3a7eab" stroke-width="1.1" fill="none" />
<path d="M957.6,606.6 V625.3 M953.4,610.6 L957.6,606.4 L961.8,610.6 M953.4,621.4 L957.6,625.6 L961.8,621.4" stroke="#3a7eab" stroke-width="1.1" fill="none" />
<rect x="963.2" y="610" width="10.6" height="1.1" fill="#2d2d2d" />
<rect x="963.2" y="614" width="10.6" height="1.1" fill="#2d2d2d" />
<rect x="963.2" y="618" width="10.6" height="1.1" fill="#2d2d2d" />
<rect x="963.2" y="622" width="10.6" height="1.1" fill="#2d2d2d" />
<path d="M982.8,614 L990,614 L986.4,619 Z" fill="#222"/>
<rect x="983.1" y="537.9" width="85" height="26" rx="4" fill="#e8e8e8" stroke="#d3d3d3"/>
<path d="M1052.6,538.4 H1064.1 Q1067.6,538.4 1067.6,541.9 V559.9 Q1067.6,563.4 1064.1,563.4 H1052.6 Z" fill="#efefef"/>
<path d="M1057.1999999999998,545.6999999999999 L1063.0,545.6999999999999 L1060.1,543.1999999999999 Z" fill="#b3b3b3"/>
<path d="M1057.1999999999998,556.0 L1063.0,556.0 L1060.1,558.5 Z" fill="#b3b3b3"/>
<text transform="matrix(0.9695,0,0,1,987.12,556.00)" font-family="Liberation Sans" font-weight="normal" font-size="12.46" fill="#333" >0</text>
<text transform="matrix(1.0247,0,0,1,1019.92,556.00)" font-family="Liberation Sans" font-weight="normal" font-size="11.74" fill="#333" >cm</text>
<rect x="983.1" y="570.1" width="85" height="26" rx="4" fill="#e8e8e8" stroke="#d3d3d3"/>
<path d="M1052.6,570.6 H1064.1 Q1067.6,570.6 1067.6,574.1 V592.1 Q1067.6,595.6 1064.1,595.6 H1052.6 Z" fill="#efefef"/>
<path d="M1057.1999999999998,577.9 L1063.0,577.9 L1060.1,575.4 Z" fill="#b3b3b3"/>
<path d="M1057.1999999999998,588.2 L1063.0,588.2 L1060.1,590.7 Z" fill="#b3b3b3"/>
<text transform="matrix(0.9695,0,0,1,987.12,588.20)" font-family="Liberation Sans" font-weight="normal" font-size="12.46" fill="#333" >0</text>
<text transform="matrix(1.0247,0,0,1,1019.92,588.20)" font-family="Liberation Sans" font-weight="normal" font-size="11.74" fill="#333" >cm</text>
<rect x="1141.9" y="538.9" width="85" height="26" rx="4" fill="#e8e8e8" stroke="#d3d3d3"/>
<path d="M1211.4,539.4 H1222.9 Q1226.4,539.4 1226.4,542.9 V560.9 Q1226.4,564.4 1222.9,564.4 H1211.4 Z" fill="#efefef"/>
<path d="M1216.0,546.6999999999999 L1221.8000000000002,546.6999999999999 L1218.9,544.1999999999999 Z" fill="#b3b3b3"/>
<path d="M1216.0,557.0 L1221.8000000000002,557.0 L1218.9,559.5 Z" fill="#b3b3b3"/>
<text transform="matrix(0.9695,0,0,1,1145.92,557.00)" font-family="Liberation Sans" font-weight="normal" font-size="12.46" fill="#333" >0</text>
<text transform="matrix(1.0247,0,0,1,1178.72,557.00)" font-family="Liberation Sans" font-weight="normal" font-size="11.74" fill="#333" >cm</text>
<rect x="1141.9" y="571.1" width="85" height="26" rx="4" fill="#e8e8e8" stroke="#d3d3d3"/>
<path d="M1211.4,571.6 H1222.9 Q1226.4,571.6 1226.4,575.1 V593.1 Q1226.4,596.6 1222.9,596.6 H1211.4 Z" fill="#efefef"/>
<path d="M1216.0,578.9 L1221.8000000000002,578.9 L1218.9,576.4 Z" fill="#b3b3b3"/>
<path d="M1216.0,589.2 L1221.8000000000002,589.2 L1218.9,591.7 Z" fill="#b3b3b3"/>
<text transform="matrix(0.9695,0,0,1,1145.92,589.20)" font-family="Liberation Sans" font-weight="normal" font-size="12.46" fill="#333" >0</text>
<text transform="matrix(1.0247,0,0,1,1178.72,589.20)" font-family="Liberation Sans" font-weight="normal" font-size="11.74" fill="#333" >cm</text>
<rect x="1141.9" y="603.7" width="85" height="26" rx="4" fill="#e8e8e8" stroke="#d3d3d3"/>
<path d="M1211.4,604.2 H1222.9 Q1226.4,604.2 1226.4,607.7 V625.7 Q1226.4,629.2 1222.9,629.2 H1211.4 Z" fill="#efefef"/>
<path d="M1216.0,611.5 L1221.8000000000002,611.5 L1218.9,609.0 Z" fill="#b3b3b3"/>
<path d="M1216.0,621.8000000000001 L1221.8000000000002,621.8000000000001 L1218.9,624.3000000000001 Z" fill="#b3b3b3"/>
<text transform="matrix(0.9695,0,0,1,1145.92,621.80)" font-family="Liberation Sans" font-weight="normal" font-size="12.46" fill="#333" >0</text>
<text transform="matrix(1.0247,0,0,1,1178.72,621.80)" font-family="Liberation Sans" font-weight="normal" font-size="11.74" fill="#333" >cm</text>
<rect x="1115.2" y="508" width="18.9" height="1.1" fill="#2d2d2d" />
<rect x="1115.2" y="528" width="18.9" height="1.1" fill="#2d2d2d" />
<rect x="1123.3000000000002" y="513" width="10.8" height="1.1" fill="#2d2d2d" />
<rect x="1123.3000000000002" y="518" width="10.8" height="1.1" fill="#2d2d2d" />
<rect x="1123.3000000000002" y="523" width="10.8" height="1.1" fill="#2d2d2d" />
<path d="M1111.8000000000002,518.5 H1120.5 M1116.5,514.3 L1120.7,518.5 L1116.5,522.7" stroke="#3a7eab" stroke-width="1.1" fill="none" />
<rect x="1148.2" y="508" width="18.7" height="1.1" fill="#2d2d2d" />
<rect x="1148.2" y="528" width="18.7" height="1.1" fill="#2d2d2d" />
<rect x="1156.3000000000002" y="513" width="10.6" height="1.1" fill="#2d2d2d" />
<rect x="1156.3000000000002" y="518" width="10.6" height="1.1" fill="#2d2d2d" />
<rect x="1156.3000000000002" y="523" width="10.6" height="1.1" fill="#2d2d2d" />
<path d="M1153.8000000000002,518.5 H1145.7 M1149.9,514.3 L1145.5,518.5 L1149.9,522.7" stroke="#3a7eab" stroke-width="1.1" fill="none" />
<rect x="1181.2" y="508" width="18.8" height="1.1" fill="#2d2d2d" />
<rect x="1189.2" y="513" width="10.8" height="1.1" fill="#2d2d2d" />
<rect x="1189.2" y="518" width="10.8" height="1.1" fill="#2d2d2d" />
<rect x="1189.2" y="523" width="10.8" height="1.1" fill="#2d2d2d" />
<rect x="1189.2" y="528" width="10.8" height="1.1" fill="#2d2d2d" />
<path d="M1178.3,518.5 H1186.2 M1182.2,514.3 L1186.4,518.5 L1182.2,522.7" stroke="#3a7eab" stroke-width="1.1" fill="none" />
<rect x="1116.3" y="546.8" width="13.5" height="1.1" fill="#2d2d2d" />
<rect x="1116.3" y="555.8" width="13.5" height="1.1" fill="#2d2d2d" />
<rect x="1124" y="549.7" width="5.8" height="1.1" fill="#2d2d2d" />
<rect x="1124" y="552.7" width="5.8" height="1.1" fill="#2d2d2d" />
<path d="M1114.6,550 V555 M1121.6,550 V555 M1114.6,552.6 H1121.6" stroke="#3a7eab" stroke-width="1.1" fill="none" />
<rect x="1115.2" y="578.9" width="13.8" height="1.1" fill="#2d2d2d" />
<rect x="1115.2" y="588.1" width="13.8" height="1.1" fill="#2d2d2d" />
<rect x="1115.2" y="582" width="5.4" height="1.1" fill="#2d2d2d" />
<rect x="1115.2" y="585.2" width="5.4" height="1.1" fill="#2d2d2d" />
<path d="M1122.6,582 V587 M1129.6,582 V587 M1122.6,584.6 H1129.6" stroke="#3a7eab" stroke-width="1.1" fill="none" />
<path d="M1114.6,609 V614 M1121.6,609 V614 M1114.6,611.6 H1121.6" stroke="#3a7eab" stroke-width="1.1" fill="none" />
<rect x="1123.4" y="611.9" width="5.6" height="1.1" fill="#2d2d2d" />
<rect x="1115.2" y="616" width="8.8" height="1.1" fill="#2d2d2d" />
<rect x="1115.2" y="619" width="13.8" height="1.1" fill="#2d2d2d" />
<rect x="1115.2" y="622" width="9.8" height="1.1" fill="#2d2d2d" />
<rect x="0" y="791" width="1256" height="29" fill="#f0f0f0" />
<rect x="0" y="790.6" width="934" height="1" fill="#d6d6d6" />
<rect x="935" y="790.6" width="321" height="1" fill="#d6d6d6" />
<rect x="5.3" y="797" width="197.7" height="20.4" rx="4" fill="#fff" stroke="#cfcfcf"/>
<text transform="matrix(0.9648,0,0,1,8.75,810.70)" font-family="Liberation Sans" font-weight="normal" font-size="12.61" fill="#222" >Suchen</text>
<path d="M215.2,810.6 L221.2,803.2 L227.2,810.6" stroke="#a8a8a8" stroke-width="1.3" fill="none" />
<path d="M249.2,803.2 L255.2,810.6 L261.2,803.2" stroke="#a8a8a8" stroke-width="1.3" fill="none" />
<rect x="275.2" y="800" width="1" height="15" fill="#d2d2d2" />
<rect x="364.1" y="800" width="1" height="15" fill="#d2d2d2" />
<rect x="562.1" y="800" width="1" height="15" fill="#d2d2d2" />
<rect x="711.5" y="800" width="1" height="15" fill="#d2d2d2" />
<rect x="1088.8" y="800" width="1" height="15" fill="#d2d2d2" />
<text transform="matrix(0.9828,0,0,1,285.67,811.60)" font-family="Liberation Sans" font-weight="normal" font-size="11.88" fill="#555" >Seite 1 von 1</text>
<text transform="matrix(0.9924,0,0,1,375.80,811.60)" font-family="Liberation Sans" font-weight="normal" font-size="11.88" fill="#555" >Ausgewählt: 3 Wörter, 14 Zeichen</text>
<text transform="matrix(0.9866,0,0,1,571.06,811.60)" font-family="Liberation Sans" font-weight="normal" font-size="11.88" fill="#555" >Deutsch (Deutschland)</text>
<path d="M697.6,804.4 L704.2,804.4 L700.9000000000001,809 Z" fill="#555"/>
<path d="M1028.7,801.2 V807.4 H1032.5 M1037.3,807.4 H1041.1 V801.2" stroke="#333" stroke-width="1.1" fill="none" />
<path d="M1034.8,808 V800.6 M1031.4,803.8 L1034.8,800.4 L1038.2,803.8" stroke="#5b9ac6" stroke-width="1.1" fill="none" />
<path d="M1028.7,812.8 V810.5 H1041.1 V812.8" stroke="#9a9a9a" stroke-width="1" fill="none" />
<path d="M1062.9,801 V802.8 H1075.3 V801" stroke="#9a9a9a" stroke-width="1" fill="none" />
<path d="M1062.9,812.4 V806.5 H1066.7 M1071.5,806.5 H1075.3 V812.4" stroke="#333" stroke-width="1.1" fill="none" />
<path d="M1069.1,806 V812.8 M1065.8,809.4 L1069.1,812.8 L1072.4,809.4" stroke="#5b9ac6" stroke-width="1.1" fill="none" />
<circle cx="1109.6" cy="806.6" r="5.6" fill="none" stroke="#3a3a3a" stroke-width="1.1"/>
<path d="M1113.6,810.8 L1117.2,814.2" stroke="#3a3a3a" stroke-width="1.6" fill="none" />
<text transform="matrix(1.0000,0,0,1,1106.97,810.40)" font-family="Liberation Sans" font-weight="normal" font-size="8.40" fill="#3d86b5" >1</text>
<path d="M1139,807.4 H1149" stroke="#333" stroke-width="1.2" fill="none" />
<text transform="matrix(0.9548,0,0,1,1165.85,811.60)" font-family="Liberation Sans" font-weight="normal" font-size="11.88" fill="#666" >100%</text>
<path d="M1201.5,804.4 L1208.8,804.4 L1205.15,809 Z" fill="#555"/>
<path d="M1228.4,807.6 H1238.2 M1233.3,802.8 V812.6" stroke="#333" stroke-width="1.2" fill="none" />
<rect x="66.5" y="135.5" width="793" height="643" fill="none" stroke="#d8212b" stroke-width="3"/>
<text transform="matrix(0.9913,0,0,1,227.19,288.00)" font-family="Liberation Sans" font-weight="bold" font-size="16.96" fill="#d8212b" >1</text>
<rect x="1220.5" y="7.7" width="30" height="25.3" fill="none" stroke="#d8212b" stroke-width="3"/>
<text transform="matrix(1.1166,0,0,1,1204.87,54.60)" font-family="Liberation Sans" font-weight="bold" font-size="16.23" fill="#d8212b" >2</text>
</svg>
</body></html>
